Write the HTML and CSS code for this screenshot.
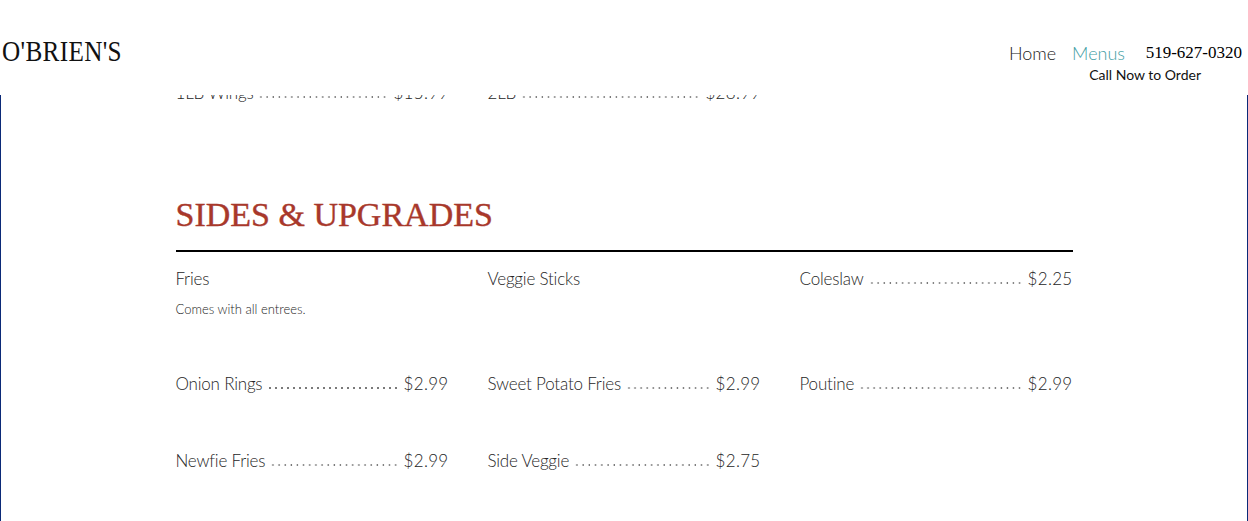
FILE: index.html
```html
<!DOCTYPE html>
<html lang="en">

<head>
    <meta charset="UTF-8">
    <meta name="viewport" content="width=device-width, initial-scale=1.0">
    <title>O'Brien's - Menus</title>
    <link rel="stylesheet" href="styles.css">
</head>

<body>
    <!-- header stays on top while the menu scrolls under it -->
    <header class="site-header">
        <div class="logo">O'BRIEN'S</div>
        <nav class="nav">
            <a href="#" class="nav-link">Home</a>
            <a href="#" class="nav-link active">Menus</a>
            <div class="phone">
                <span class="phone-number">519-627-0320</span>
                <span class="phone-note">Call Now to Order</span>
            </div>
        </nav>
    </header>

    <main class="page">
        <div class="menu">
            <!-- tail of the wings section, mostly under the header -->
            <div class="item-grid">
                <div class="item">
                    <div class="item-line"><span class="item-name">1LB Wings</span><span class="dots"></span><span class="item-price">$15.99</span></div>
                </div>
                <div class="item">
                    <div class="item-line"><span class="item-name">2LB</span><span class="dots"></span><span class="item-price">$28.99</span></div>
                </div>
            </div>

            <section class="section">
                <h2 class="section-title">SIDES &amp; UPGRADES</h2>
                <div class="item-grid">
                    <div class="item">
                        <div class="item-line"><span class="item-name">Fries</span></div>
                        <p class="item-desc">Comes with all entrees.</p>
                    </div>
                    <div class="item">
                        <div class="item-line"><span class="item-name">Veggie Sticks</span></div>
                    </div>
                    <div class="item">
                        <div class="item-line"><span class="item-name">Coleslaw</span><span class="dots"></span><span class="item-price">$2.25</span></div>
                    </div>
                    <div class="item">
                        <div class="item-line"><span class="item-name">Onion Rings</span><span class="dots"></span><span class="item-price">$2.99</span></div>
                    </div>
                    <div class="item">
                        <div class="item-line"><span class="item-name">Sweet Potato Fries</span><span class="dots"></span><span class="item-price">$2.99</span></div>
                    </div>
                    <div class="item">
                        <div class="item-line"><span class="item-name">Poutine</span><span class="dots"></span><span class="item-price">$2.99</span></div>
                    </div>
                    <div class="item">
                        <div class="item-line"><span class="item-name">Newfie Fries</span><span class="dots"></span><span class="item-price">$2.99</span></div>
                    </div>
                    <div class="item">
                        <div class="item-line"><span class="item-name">Side Veggie</span><span class="dots"></span><span class="item-price">$2.75</span></div>
                    </div>
                </div>
            </section>
        </div>
    </main>
</body>

</html>
```

FILE: styles.css
```css
:root {
    --text: #262626;
    --accent: #3f9ea4;   /* active nav link */
    --title: #a8382b;    /* section headings */
    --frame: #0b2a78;    /* page side borders */
}

body {
    margin: 0;
    background: #fff;
    font-family: Lato, "Open Sans", sans-serif;
    color: var(--text);
}

/* 顶部导航 */
.site-header {
    position: fixed;
    top: 0;
    left: 0;
    right: 0;
    height: 95px;
    background: #fff;
    z-index: 10;
    display: flex;
    justify-content: space-between;
    align-items: flex-start;
    padding: 0 6px 0 2px;
}

/* 窄体衬线字标 */
.logo {
    font-family: "Liberation Serif", serif;
    font-size: 30px;
    letter-spacing: 0.4px;
    color: #111;
    margin-top: 34px;
    transform: scaleX(0.84);
    transform-origin: left center;
}

.nav {
    display: flex;
    align-items: flex-start;
    gap: 16px;
    margin-top: 41px;
}

.nav-link {
    font-size: 18px;
    font-weight: 300;
    line-height: 24px;
    color: #222;
    text-decoration: none;
}

.nav-link.active {
    color: var(--accent);
}

.phone {
    width: 97px;
    display: flex;
    flex-direction: column;
    align-items: flex-end;
    margin-left: 4px;
}

.phone-number {
    font-family: "Liberation Serif", serif;
    font-size: 17px;
    line-height: 24px;
    color: #000;
    white-space: nowrap;
}

.phone-note {
    font-size: 14px;
    line-height: 20px;
    color: #111;
    white-space: nowrap;
    margin-right: 41px;
}

/* 页面主体 */
.page {
    border-left: 1px solid var(--frame);
    border-right: 1px solid var(--frame);
    min-height: 100vh;
    box-sizing: border-box;
    padding-top: 81px;
}

.menu {
    width: 897px;
    margin: 0 auto;
}

.section {
    margin-top: 90px;
}

.section-title {
    margin: 0 0 15px;
    padding-bottom: 15px;
    border-bottom: 2px solid #000;
    font-family: "Liberation Serif", serif;
    font-size: 34px;
    line-height: 40px;
    font-weight: normal;
    -webkit-text-stroke: 0.4px var(--title);
    color: var(--title);
}

.item-grid {
    display: grid;
    grid-template-columns: repeat(3, 1fr);
    column-gap: 39px;
    row-gap: 53px;
}

.item-line {
    display: flex;
    align-items: baseline;
    font-size: 17px;
    font-weight: 300;
    letter-spacing: -0.2px;
    line-height: 24px;
}

.item-price {
    letter-spacing: 0.3px;
}

/* 点状引导线 */
.dots {
    flex: 1;
    height: 4px;
    margin: 0 5px;
    background-image: radial-gradient(circle, #777 0.7px, transparent 1.1px);
    background-size: 6px 4px;
    background-repeat: space no-repeat;
    background-position: right bottom;
}

.item-desc {
    margin: 8px 0 0;
    font-size: 13px;
    font-weight: 300;
    line-height: 20px;
}
```
